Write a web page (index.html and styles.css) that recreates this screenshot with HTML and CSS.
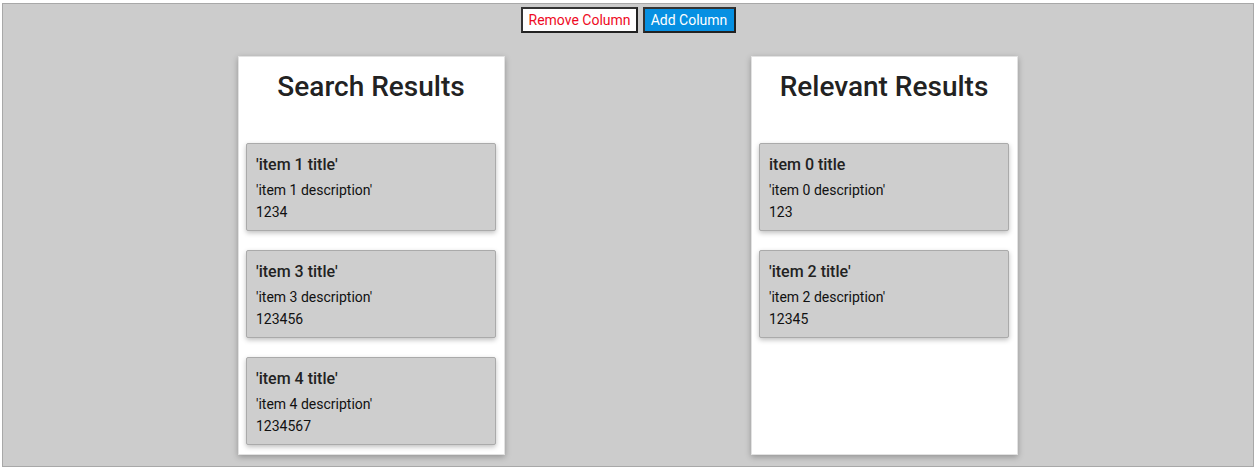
FILE: index.html
```html
<!DOCTYPE html>
<html>
<head>
<meta charset="utf-8">
<link rel="stylesheet" href="styles.css">
</head>
<body>
<div class="board">
  <div class="toolbar">
    <button class="btn btn-remove">Remove Column</button>
    <button class="btn btn-add">Add Column</button>
  </div>
  <div class="columns">
    <section class="column">
      <h2 class="column-title">Search Results</h2>
      <div class="items">
        <div class="item">
          <div class="item-title">'item 1 title'</div>
          <div class="item-line">'item 1 description'</div>
          <div class="item-line">1234</div>
        </div>
        <div class="item">
          <div class="item-title">'item 3 title'</div>
          <div class="item-line">'item 3 description'</div>
          <div class="item-line">123456</div>
        </div>
        <div class="item">
          <div class="item-title">'item 4 title'</div>
          <div class="item-line">'item 4 description'</div>
          <div class="item-line">1234567</div>
        </div>
      </div>
    </section>
    <section class="column">
      <h2 class="column-title">Relevant Results</h2>
      <div class="items">
        <div class="item">
          <div class="item-title">item 0 title</div>
          <div class="item-line">'item 0 description'</div>
          <div class="item-line">123</div>
        </div>
        <div class="item">
          <div class="item-title">'item 2 title'</div>
          <div class="item-line">'item 2 description'</div>
          <div class="item-line">12345</div>
        </div>
      </div>
    </section>
  </div>
</div>
</body>
</html>
```
FILE: styles.css
```css
html, body {
  margin: 0;
  padding: 0;
  background: #ffffff;
}
body {
  padding: 3px 2px 2px 2px;
  font-family: Roboto, "Liberation Sans", sans-serif;
}
.board {
  box-sizing: border-box;
  height: 464px;
  border: 1px solid #a8a8a8;
  background: #cccccc;
  padding-top: 3px;
}
.toolbar {
  display: flex;
  justify-content: center;
  gap: 5px;
}
.btn {
  box-sizing: border-box;
  height: 26px;
  font-family: Roboto, "Liberation Sans", sans-serif;
  font-size: 14px;
  padding: 0 6px;
  border: 2px solid #333333;
  border-right-color: #222;
  border-bottom-color: #222;
  white-space: nowrap;
  cursor: pointer;
}
.btn-remove {
  background: #ffffff;
  color: #ee0a24;
  width: 117px;
}
.btn-add {
  background: #0690e2;
  color: #ffffff;
  width: 93px;
}
.columns {
  display: flex;
  justify-content: center;
  gap: 246px;
  margin-top: 23px;
}
.column {
  box-sizing: border-box;
  width: 267px;
  background: #ffffff;
  border: 1px solid #e2e2e2;
  box-shadow: 0 2px 6px rgba(0, 0, 0, 0.28);
  padding: 0 8px 9px 7px;
  min-height: 399px;
}
.column-title {
  margin: 0;
  padding-top: 15px;
  height: 71px;
  box-sizing: border-box;
  text-align: center;
  font-size: 28px;
  line-height: 30px;
  font-weight: 500;
  color: #222222;
}
.items {
  display: flex;
  flex-direction: column;
  gap: 19px;
  padding-top: 15px;
}
.item {
  box-sizing: border-box;
  height: 88px;
  background: #cecece;
  border: 1px solid #aaaaaa;
  border-radius: 2px;
  box-shadow: 0 2px 5px rgba(0, 0, 0, 0.25);
  padding: 10px 9px 0 9px;
  color: #111111;
}
.item-title {
  font-size: 16px;
  font-weight: 500;
  line-height: 22px;
  color: #222222;
  margin-bottom: 3px;
}
.item-line {
  font-size: 14px;
  line-height: 22px;
}
```
